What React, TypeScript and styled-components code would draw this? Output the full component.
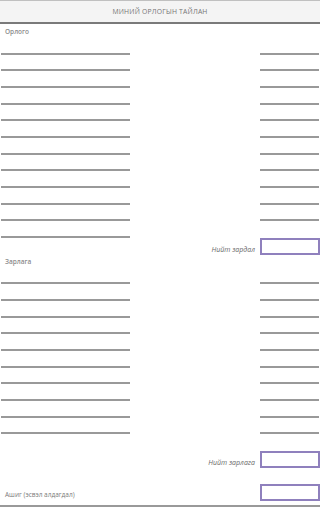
import React from 'react';
import styled, { createGlobalStyle } from 'styled-components';

const GlobalStyle = createGlobalStyle`
  html,body{
    margin:0;
    padding:0;
    background:#fff;
    font-family:"Open Sans","Liberation Sans",sans-serif;
  }
`
const ROW = 16.667;

const Sheet = styled.div`
  width:320px;
  display:flex;
  flex-direction:column;
`
const Header = styled.div`
  height:21px;
  border-top:1px solid #c0c0c0;
  border-bottom:2px solid #7a7a7a;
  background-color:#f4f4f4;
  display:flex;
  align-items:center;
  justify-content:center;
  font-size:6.8px;
  font-weight:500;
  letter-spacing:0.2px;
  color:#747474;
`
const SectionLabel = styled.div<{ $height: number }>`
  height:${p => p.$height}px;
  display:flex;
  align-items:center;
  padding-left:5px;
  font-size:6.5px;
  font-weight:600;
  color:#8c8c8c;
`
const Row = styled.div`
  height:${ROW}px;
  display:grid;
  grid-template-columns:1px 129px 1fr 59px 1px;
`
const LeftLine = styled.div`
  grid-column:2;
  border-bottom:2px solid #999;
`
const RightLine = styled.div`
  grid-column:4;
  border-bottom:2px solid #999;
`
const TotalRow = styled.div`
  height:${ROW}px;
  display:flex;
  align-items:stretch;
  justify-content:flex-end;
  gap:5px;
`
const TotalLabel = styled.span`
  align-self:flex-end;
  margin-bottom:1px;
  font-size:7px;
  font-style:italic;
  color:#6a6a6a;
`
const ProfitRow = styled.div`
  height:${ROW}px;
  display:flex;
  align-items:center;
  justify-content:space-between;
  padding-left:5px;
`
const ProfitLabel = styled.span`
  margin-top:3px;
  font-size:6.5px;
  color:#7a7a7a;
`
const AmountBox = styled.div`
  width:56px;
  height:13px;
  border:2px solid #8f80bd;
  background:#fff;
`
const Spacer = styled.div`
  height:${ROW}px;
`
const BottomRule = styled.div`
  margin-top:4px;
  border-bottom:2px solid #999;
`

const LineRows = ({ count, rightCount }: { count: number; rightCount: number }) => (
  <>
    {Array.from({ length: count }).map((_, i) => (
      <Row key={i}>
        <LeftLine />
        {i < rightCount && <RightLine />}
      </Row>
    ))}
  </>
)

const App = () => {
  return (
    <Sheet>
      <GlobalStyle />
      <Header>МИНИЙ ОРЛОГЫН ТАЙЛАН</Header>
      <SectionLabel $height={14}>Орлого</SectionLabel>
      <LineRows count={12} rightCount={11} />
      <TotalRow>
        <TotalLabel>Нийт зардал</TotalLabel>
        <AmountBox />
      </TotalRow>
      <SectionLabel $height={13.3}>Зарлага</SectionLabel>
      <LineRows count={10} rightCount={10} />
      <Spacer />
      <TotalRow>
        <TotalLabel>Нийт зарлага</TotalLabel>
        <AmountBox />
      </TotalRow>
      <Spacer />
      <ProfitRow>
        <ProfitLabel>Ашиг (эсвэл алдагдал)</ProfitLabel>
        <AmountBox />
      </ProfitRow>
      <BottomRule />
    </Sheet>
  )
}
export default App;
